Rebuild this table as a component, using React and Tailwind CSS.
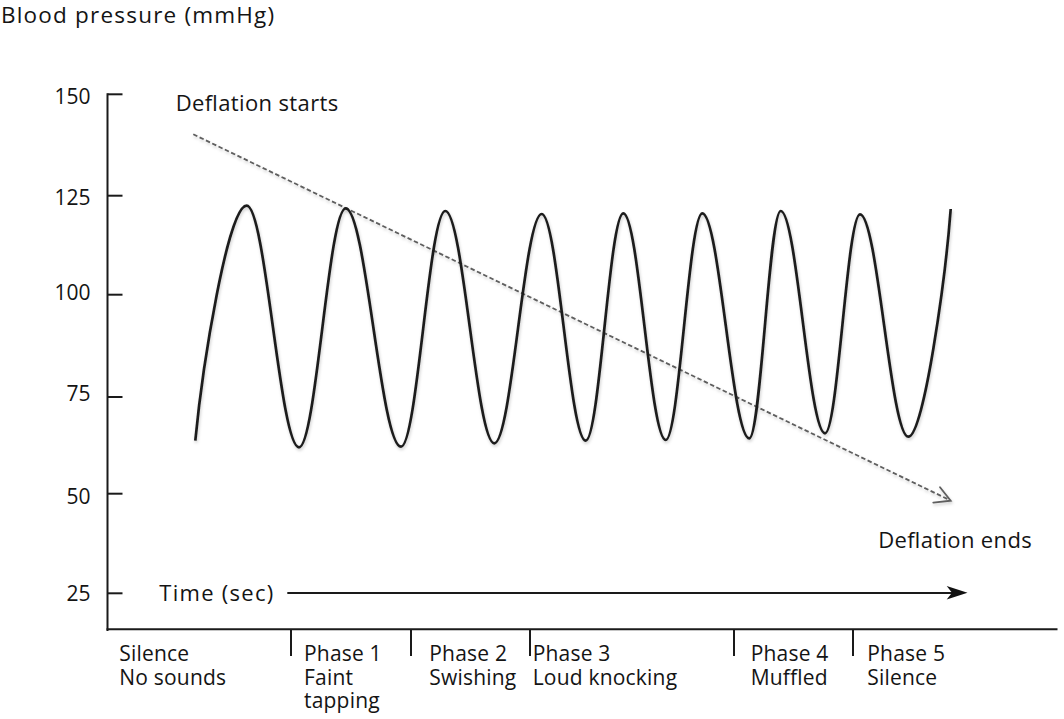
import React from "react";

const FONT = "'Open Sans', sans-serif";

const extremes = [
  [195.3, 440.7],
  [246.7, 205.7],
  [299, 447.3],
  [345.7, 208.3],
  [401, 446.7],
  [445.3, 211],
  [494.3, 443.3],
  [541.7, 214],
  [585.7, 440.7],
  [623.3, 213.3],
  [665.7, 440],
  [702.3, 213.3],
  [749.3, 438.3],
  [780.7, 211],
  [825, 433.3],
  [860, 214.3],
  [908.3, 436.7],
  [950.7, 209],
];

function wavePath() {
  const k = 0.3634;
  let d = `M ${extremes[0][0]} ${extremes[0][1]}`;
  for (let i = 1; i < extremes.length; i++) {
    const [x0, y0] = extremes[i - 1];
    const [x1, y1] = extremes[i];
    const dx = x1 - x0;
    const dy = y1 - y0;
    let c1 = [x0 + k * dx, y0];
    let c2 = [x1 - k * dx, y1];
    if (i === 1) c1 = [x0 + 0.14 * dx, y0 + 0.32 * dy];
    if (i === extremes.length - 1) c2 = [x1 - 0.12 * dx, y1 - 0.3 * dy];
    d += ` C ${c1[0].toFixed(2)} ${c1[1].toFixed(2)} ${c2[0].toFixed(2)} ${c2[1].toFixed(2)} ${x1} ${y1}`;
  }
  return d;
}

const ticks = [
  { v: "150", y: 94.3, by: 104 },
  { v: "125", y: 195.7, by: 205 },
  { v: "100", y: 294.7, by: 300 },
  { v: "75", y: 397, by: 400.7 },
  { v: "50", y: 493.7, by: 504.3 },
  { v: "25", y: 593.3, by: 601 },
];

function Chart() {
  return (
    <svg width="1064" height="591" viewBox="0 40 1064 591" className="block shrink-0">
      <defs>
        <filter id="shadow" x="-5%" y="-5%" width="110%" height="115%">
          <feDropShadow dx="0.8" dy="2" stdDeviation="1.4" floodColor="#000" floodOpacity="0.2" />
        </filter>
      </defs>
      <g fontFamily={FONT} fill="#141414" fontSize="21">
        {ticks.map((t) => (
          <text key={t.v} x="90.5" y={t.by} textAnchor="end">
            {t.v}
          </text>
        ))}
        <text x="175.7" y="111" fontSize="22" textLength="162.6" lengthAdjust="spacing">
          Deflation starts
        </text>
        <text x="878.3" y="547.7" fontSize="22" textLength="153.4" lengthAdjust="spacing">
          Deflation ends
        </text>
        <text x="159.3" y="600.7" fontSize="22" textLength="114" lengthAdjust="spacing">
          Time (sec)
        </text>
      </g>

      {/* axes */}
      <g stroke="#1a1a1a" strokeWidth="2" fill="none">
        <line x1="107.5" y1="93.3" x2="107.5" y2="631" />
        {ticks.map((t) => (
          <line key={t.v} x1="107.5" y1={t.y} x2="122.5" y2={t.y} />
        ))}
        <line x1="106.5" y1="629.3" x2="1057.5" y2="629.3" />
        <line x1="287.3" y1="593" x2="955" y2="593" />
      </g>
      <polygon points="967.5,592.8 946.7,586 952,592.8 946.7,599.5" fill="#111" />

      {/* deflation dashed arrow */}
      <g filter="url(#shadow)" stroke="#5e5e5e" strokeWidth="1.8" fill="none" strokeLinecap="round">
        <line x1="193.3" y1="134.3" x2="949.5" y2="500" strokeDasharray="4.5 2.5" strokeLinecap="butt" />
        <polyline points="940,487.3 950.7,500.7 933.3,502.7" />
      </g>

      {/* pressure wave */}
      <path
        d={wavePath()}
        stroke="#1e1e1e"
        strokeWidth="2.7"
        fill="none"
        filter="url(#shadow)"
        strokeLinejoin="round"
      />
    </svg>
  );
}

function Divider() {
  return <div className="w-[2px] h-[26px] -mt-[1px] bg-[#1a1a1a] shrink-0" />;
}

function Label({ lines, className }) {
  return (
    <div className={"mt-[11px] text-[21px] leading-[23.7px] tracking-[0.2px] text-[#141414] " + className}>
      {lines.map((l) => (
        <div key={l} className="whitespace-nowrap">
          {l}
        </div>
      ))}
    </div>
  );
}

export default function App() {
  return (
    <div className="w-[1064px] h-[719px] bg-white overflow-hidden flex flex-col font-['Open_Sans',sans-serif]">
      <div className="h-[40px] shrink-0 pl-[1px] text-[22.5px] leading-[30.6px] tracking-[1.2px] text-[#141414] whitespace-nowrap">
        Blood pressure (mmHg)
      </div>
      <Chart />
      <div className="flex items-start">
        <div className="w-[289.7px] shrink-0 pl-[119.3px]">
          <Label lines={["Silence", "No sounds"]} />
        </div>
        <div className="w-[120px] shrink-0 flex items-start">
          <Divider />
          <Label lines={["Phase 1", "Faint", "tapping"]} className="ml-[12.3px]" />
        </div>
        <div className="w-[119.3px] shrink-0 flex items-start">
          <Divider />
          <Label lines={["Phase 2", "Swishing"]} className="ml-[17.6px]" />
        </div>
        <div className="w-[204.3px] shrink-0 flex items-start">
          <Divider />
          <Label lines={["Phase 3", "Loud knocking"]} className="ml-[1.7px]" />
        </div>
        <div className="w-[119px] shrink-0 flex items-start">
          <Divider />
          <Label lines={["Phase 4", "Muffled"]} className="ml-[15.4px]" />
        </div>
        <div className="flex-1 flex items-start">
          <Divider />
          <Label lines={["Phase 5", "Silence"]} className="ml-[13px]" />
        </div>
      </div>
    </div>
  );
}
